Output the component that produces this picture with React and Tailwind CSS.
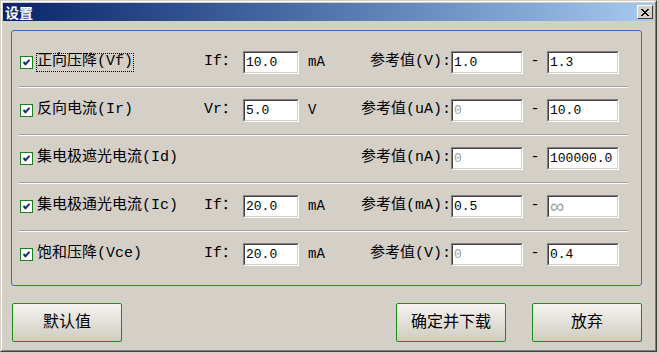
import React from 'react'

const rows = [
  { label: '正向压降(Vf)', focus: true, mid: 'If：', midVal: '10.0', unit: 'mA', ref: '参考值(V):', lo: '1.0', loOff: false, hi: '1.3', hiOff: false },
  { label: '反向电流(Ir)', mid: 'Vr：', midVal: '5.0', unit: 'V', ref: '参考值(uA):', lo: '0', loOff: true, hi: '10.0', hiOff: false },
  { label: '集电极遮光电流(Id)', mid: null, ref: '参考值(nA):', lo: '0', loOff: true, hi: '100000.0', hiOff: false },
  { label: '集电极通光电流(Ic)', mid: 'If：', midVal: '20.0', unit: 'mA', ref: '参考值(mA):', lo: '0.5', loOff: false, hi: '∞', hiOff: true },
  { label: '饱和压降(Vce)', mid: 'If：', midVal: '20.0', unit: 'mA', ref: '参考值(V):', lo: '0', loOff: true, hi: '0.4', hiOff: false },
]

function Field({ value, disabled, wide }) {
  return (
    <div
      className={
        (wide ? 'w-[72px] ' : 'w-[56px] ') +
        'h-[23px] shrink-0 border border-t-[#808080] border-l-[#808080] border-b-white border-r-white'
      }
    >
      <div className="h-full flex items-center bg-white border border-t-[#404040] border-l-[#404040] border-b-[#d4d0c8] border-r-[#d4d0c8] pl-[1px] overflow-hidden">
        <span
          className={
            'leading-none ' +
            (value === '∞' ? "text-[20px] font-['DejaVu_Sans',sans-serif] font-light " : 'text-[13px] ') +
            (disabled ? 'text-[#a0a0a0]' : 'text-black')
          }
        >
          {value}
        </span>
      </div>
    </div>
  )
}

function Check() {
  return (
    <div className="w-[13px] h-[13px] shrink-0 border border-[#1d7d1d] bg-white flex items-center justify-center">
      <svg width="9" height="9" viewBox="0 0 9 9">
        <polyline points="1.5,4 3.5,6.2 7.5,1.8" fill="none" stroke="#1b2a78" strokeWidth="2" />
      </svg>
    </div>
  )
}

function Row({ r }) {
  return (
    <div className="h-[24px] flex items-center pl-[8px] pr-[22px] text-[15px] text-black">
      <Check />
      <div className="w-[168px] ml-[3px] shrink-0 flex">
        <span
          className={
            'border px-0 h-[19px] flex items-center whitespace-nowrap ' +
            (r.focus ? 'border-dotted border-black' : 'border-transparent')
          }
        >
          {r.label}
        </span>
      </div>
      {r.mid ? (
        <>
          <div className="w-[39px] shrink-0 whitespace-nowrap">{r.mid}</div>
          <Field value={r.midVal} />
          <div className="ml-[9px] whitespace-nowrap text-[14px]">{r.unit}</div>
        </>
      ) : null}
      <div className="flex-1 flex justify-end whitespace-nowrap">{r.ref}</div>
      <Field value={r.lo} disabled={r.loOff} wide />
      <div className="w-[24px] shrink-0 flex justify-center">-</div>
      <Field value={r.hi} disabled={r.hiOff} wide />
    </div>
  )
}

function Separator() {
  return <div className="ml-[7px] mr-[13px] mt-[12px] mb-[10px] border-t border-t-[#a0a0a0] border-b border-b-white" />
}

function Btn({ children }) {
  return (
    <button className="w-[110px] h-[39px] shrink-0 rounded-[2px] border border-[#169016] bg-linear-to-b from-[#f5f4f1] to-[#cfcbc1] text-[16px] text-black flex items-center justify-center">
      {children}
    </button>
  )
}

export default function App() {
  return (
    <div className="w-[659px] h-[354px] bg-[#d4d0c8] font-['Liberation_Mono','Noto_Sans_CJK_SC',monospace]">
      <div className="w-[657px] h-[352px] border border-t-[#d4d0c8] border-l-[#d4d0c8] border-b-[#404040] border-r-[#404040]">
        <div className="h-full border border-t-white border-l-white border-b-[#808080] border-r-[#808080] p-[1px] flex flex-col">
          {/* title bar */}
          <div className="h-[18px] shrink-0 bg-linear-to-r from-[#0a246a] to-[#a6caf0] flex items-center justify-between pl-[2px] pr-[1px]">
            <span className="text-white font-bold text-[14px] leading-none font-['Noto_Sans_CJK_SC',sans-serif]">设置</span>
            <div className="w-[16px] h-[14px] bg-[#d4d0c8] border border-t-white border-l-white border-b-[#404040] border-r-[#404040] flex items-center justify-center">
              <svg width="8" height="7" viewBox="0 0 8 7" shapeRendering="crispEdges">
                <path d="M0 0h2v1h-2zM6 0h2v1h-2zM1 1h2v1h-2zM5 1h2v1h-2zM2 2h4v1h-4zM3 3h2v1h-2zM2 4h4v1h-4zM1 5h2v1h-2zM5 5h2v1h-2zM0 6h2v1h-2zM6 6h2v1h-2z" fill="#000" />
              </svg>
            </div>
          </div>

          {/* group box */}
          <div className="mt-[9px] ml-[8px] mr-[12px] h-[256px] border border-[#3c6fac] rounded-[3px] pt-[19px]">
            {rows.map((r, i) => (
              <div key={i}>
                <Row r={r} />
                {i < rows.length - 1 ? <Separator /> : null}
              </div>
            ))}
          </div>

          {/* buttons */}
          <div className="mt-[17px] ml-[9px] mr-[12px] flex">
            <Btn>默认值</Btn>
            <div className="flex-1" />
            <Btn>确定并下载</Btn>
            <div className="w-[26px]" />
            <Btn>放弃</Btn>
          </div>
        </div>
      </div>
    </div>
  )
}
